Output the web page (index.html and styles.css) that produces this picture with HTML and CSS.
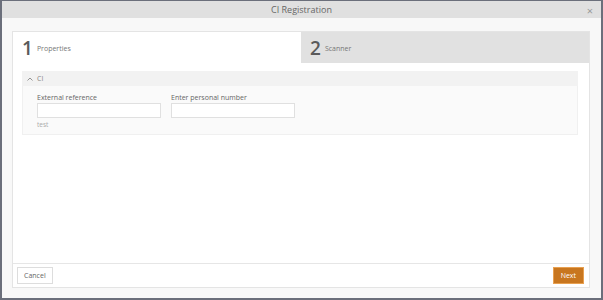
FILE: index.html
```html
<!DOCTYPE html>
<html lang="en">
<head>
  <meta charset="UTF-8">
  <title>CI Registration</title>
  <link rel="stylesheet" href="styles.css">
</head>
<body>
  <div class="window">
    <div class="titlebar">
      <span class="title">CI Registration</span>
      <span class="close">&times;</span>
    </div>
    <div class="content">
      <div class="panel">
        <div class="tabs">
          <div class="tab active"><span class="num">1</span><span class="label">Properties</span></div>
          <div class="tab"><span class="num">2</span><span class="label">Scanner</span></div>
        </div>
        <div class="tab-body">
          <div class="section">
            <div class="section-head">
              <svg class="caret" width="6" height="4" viewBox="0 0 6 4"><path d="M0.5 3.5 L3 1 L5.5 3.5" fill="none" stroke="#888" stroke-width="0.9"/></svg>
              CI
            </div>
            <div class="section-body">
              <div class="field">
                <label>External reference</label>
                <input type="text">
                <span class="hint">test</span>
              </div>
              <div class="field">
                <label>Enter personal number</label>
                <input type="text">
              </div>
            </div>
          </div>
        </div>
        <div class="footer">
          <button class="btn">Cancel</button>
          <button class="btn primary">Next</button>
        </div>
      </div>
    </div>
  </div>
</body>
</html>
```
FILE: styles.css
```css
* {
  box-sizing: border-box;
}
body {
  margin: 0;
  font-family: "Open Sans", "Noto Sans", sans-serif;
  color: #555;
}
.window {
  width: 603px;
  height: 300px;
  display: flex;
  flex-direction: column;
  border: 2px solid #6b6f7b;
  border-top: 1px solid #6b6f7b;
  background: #f8f8f8;
}
.titlebar {
  height: 17px;
  background: #e0e0e0;
  display: flex;
  align-items: center;
  justify-content: center;
  position: relative;
}
.title {
  font-size: 9px;
  color: #666;
}
.close {
  position: absolute;
  right: 8px;
  top: 2px;
  font-size: 11px;
  color: #999;
}
.content {
  flex: 1;
  padding: 13px 11px 10px 10px;
  display: flex;
}
.panel {
  flex: 1;
  background: #fff;
  border: 1px solid #e4e4e4;
  display: flex;
  flex-direction: column;
}
.tabs {
  display: grid;
  grid-template-columns: 1fr 1fr;
  height: 31px;
}
.tab {
  display: flex;
  align-items: center;
  padding-left: 9px;
  background: #e1e1e1;
}
.tab.active {
  background: #fff;
}
.num {
  font-size: 19px;
  font-weight: 600;
  color: #5a5a5a;
  margin-right: 4px;
}
.label {
  font-size: 7px;
  color: #777;
  padding-top: 2px;
}
.tab-body {
  flex: 1;
  padding: 8px 11px 0 9px;
}
.section-head {
  height: 15px;
  background: #f2f2f2;
  font-size: 7px;
  color: #888;
  display: flex;
  align-items: center;
  padding-left: 5px;
}
.caret {
  margin-right: 4px;
}
.section-body {
  background: #fafafa;
  border: 1px solid #f0f0f0;
  border-top: none;
  height: 49px;
  padding: 7px 0 0 14px;
  display: flex;
  gap: 10px;
}
.field {
  display: flex;
  flex-direction: column;
  width: 124px;
}
.field label {
  font-size: 7px;
  color: #666;
  line-height: 10px;
}
.field input {
  height: 15px;
  border: 1px solid #e0e0e0;
  background: #fff;
  margin: 0;
}
.hint {
  font-size: 6.5px;
  color: #aaa;
  margin-top: 2px;
}
.footer {
  border-top: 1px solid #e6e6e6;
  height: 24px;
  display: flex;
  justify-content: space-between;
  align-items: center;
  padding: 0 5px 0 4px;
}
.btn {
  font-family: inherit;
  font-size: 7px;
  height: 17px;
  padding: 0 6px;
  background: #fff;
  border: 1px solid #ddd;
  color: #666;
}
.btn.primary {
  background: #c8761f;
  border-color: #e8a050;
  color: #fff;
  padding: 0 7px;
}
```
